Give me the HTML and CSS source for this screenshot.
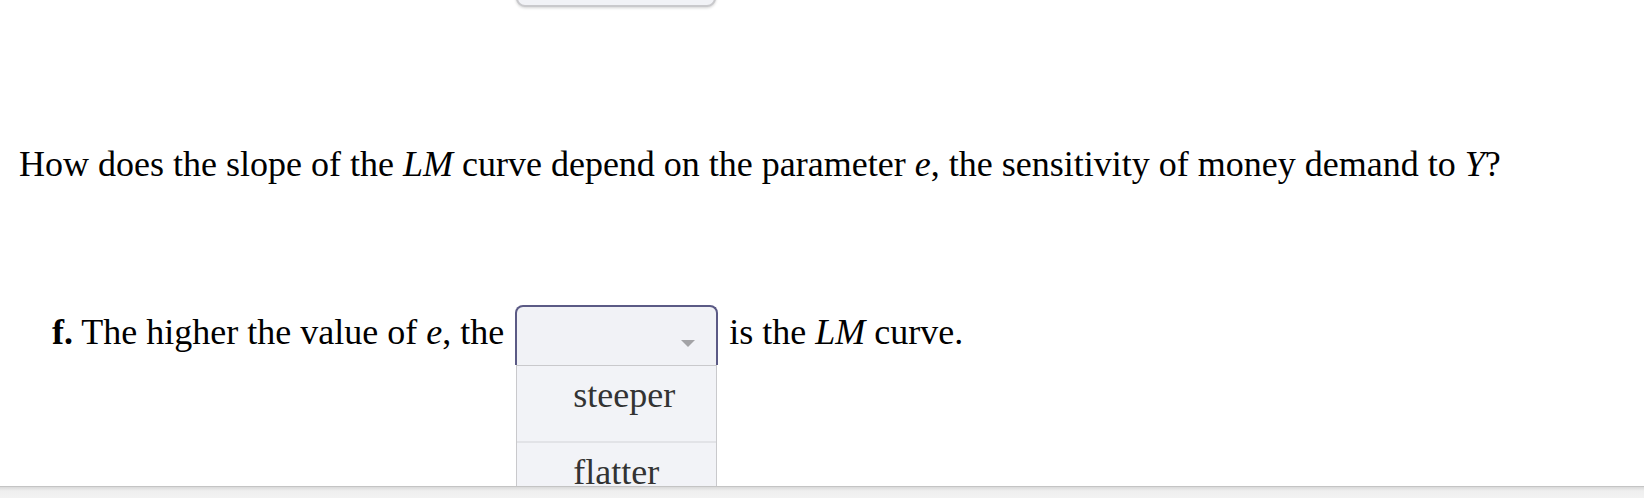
FILE: index.html
```html
<!DOCTYPE html>
<html lang="en">
<head>
<meta charset="utf-8">
<title>LM curve question</title>
<link rel="stylesheet" href="styles.css">
</head>
<body>
<div class="page">
  <div class="prev-select"></div>
  <p class="question">How does the slope of the <i>LM</i> curve depend on the parameter <i>e</i>, the sensitivity of money demand to <i>Y</i>?</p>
  <div class="part">
    <span class="text"><b>f.</b> The higher the value of <i>e</i>, the</span>
    <div class="dropdown">
      <div class="select"><span class="arrow"></span></div>
      <ul class="options">
        <li class="option">steeper</li>
        <li class="option">flatter</li>
      </ul>
    </div>
    <span class="text">is the <i>LM</i> curve.</span>
  </div>
</div>
<div class="bottom-bar"></div>
</body>
</html>
```

FILE: styles.css
```css
html, body {
  margin: 0;
  padding: 0;
  background: #ffffff;
  overflow: hidden;
}

body {
  font-family: "Liberation Serif", "Times New Roman", serif;
  font-size: 36px;
  line-height: 42px;
  color: #000000;
  height: 498px;
}

.page {
  display: flex;
  flex-direction: column;
  height: 498px;
  overflow: hidden;
}

.prev-select {
  flex: none;
  margin-top: -53px;
  margin-left: 516px;
  width: 196px;
  height: 56px;
  background: #f1f2f6;
  border: 2px solid #c9c9cc;
  border-radius: 9px;
  box-shadow: 0 1px 3px rgba(0, 0, 0, 0.18);
}

.question {
  margin: 136px 0 0 0;
  padding-left: 19px;
}

.part {
  display: flex;
  align-items: flex-start;
  margin-top: 120px;
  padding-left: 52px;
}

.text {
  margin-top: 6px;
  white-space: nowrap;
}

.dropdown {
  margin: 0 11px;
  width: 203px;
  display: flex;
  flex-direction: column;
}

.select {
  position: relative;
  height: 58px;
  background: #f1f2f6;
  border: 2px solid #5b5a85;
  border-bottom: none;
  border-radius: 8px 8px 0 0;
}

.arrow {
  position: absolute;
  right: 21px;
  top: 33px;
  width: 0;
  height: 0;
  border-left: 7px solid transparent;
  border-right: 7px solid transparent;
  border-top: 7px solid #a3a3a6;
}

.options {
  list-style: none;
  margin: 0 1px;
  padding: 0;
  background: #f2f3f7;
  border: 1px solid #c9c9cc;
  color: #333333;
}

.option {
  padding: 8px 0 25px 56px;
  border-bottom: 2px solid #e2e3e7;
}

.bottom-bar {
  position: fixed;
  left: 0;
  right: 0;
  bottom: 0;
  height: 11px;
  background: linear-gradient(#d9d9d9, #efefef 4px, #f2f2f2);
  border-top: 1px solid #c4c4c4;
}
```
